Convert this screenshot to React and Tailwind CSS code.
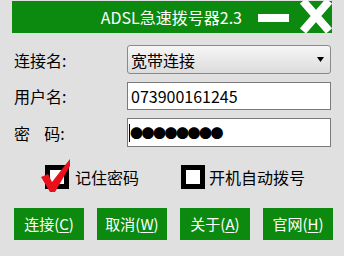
import React from "react";

const font = { fontFamily: '"Noto Sans CJK SC", "Noto Sans", sans-serif' };

const Check = ({ checked }) => (
  <span className="relative w-[24px] h-[24px] bg-black flex items-center justify-center">
    <span className="w-[14px] h-[14px] bg-white" />
    {checked && (
      <svg className="absolute left-[-8px] top-[-8px]" width="40" height="40" viewBox="0 0 40 40">
        <path d="M4 20 L11 17 L15 25 L29 7 L33 2 L33 9 L18 35 L13 35 Z" fill="#e8101a" />
      </svg>
    )}
  </span>
);

const Btn = ({ label, k }) => (
  <button className="w-[70px] h-[32px] bg-[#0b8a0f] text-white text-[15px] flex items-center justify-center">
    {label}(<span className="underline underline-offset-2">{k}</span>)
  </button>
);

export default function App() {
  return (
    <div className="w-[344px] h-[256px] bg-[#e0e0e0] flex flex-col text-black" style={font}>
      {/* title bar */}
      <div className="ml-[12px] mt-[1px] w-[320px] h-[32px] bg-[#0b8a0f] flex items-center text-white">
        <div className="flex-1 text-right pr-[16px] text-[16px] leading-none">ADSL急速拨号器2.3</div>
        <div className="w-[31px] h-[8px] bg-white mt-[1px]" />
        <svg className="ml-[11px] -mt-[2px]" width="32" height="34" viewBox="0 0 32 34">
          <path d="M3 2 L29 32 M29 2 L3 32" stroke="#fff" strokeWidth="8" />
        </svg>
      </div>

      {/* form */}
      <div className="flex flex-col gap-[8px] mt-[12px] pl-[14px]">
        <div className="flex items-center">
          <span className="w-[113px] text-[16px]">连接名:</span>
          <div className="w-[204px] h-[29px] rounded-[3px] border border-[#8a8a8a] bg-gradient-to-b from-[#f6f6f6] to-[#dcdcdc] flex items-center px-[3px] text-[16px]">
            <span className="flex-1">宽带连接</span>
            <svg className="mr-[3px]" width="7" height="5" viewBox="0 0 7 5">
              <path d="M0 0 H7 L3.5 5 Z" fill="#000" />
            </svg>
          </div>
        </div>
        <div className="flex items-center">
          <span className="w-[113px] text-[16px]">用户名:</span>
          <div className="w-[204px] h-[28px] border border-[#7a7a7a] bg-white flex items-center px-[3px] text-[16px]">
            073900161245
          </div>
        </div>
        <div className="flex items-center">
          <span className="w-[113px] text-[16px]">密&nbsp;&nbsp;&nbsp;&nbsp;码:</span>
          <div className="w-[204px] h-[29px] border border-[#7a7a7a] bg-white flex items-center pl-[1px] text-[16px]">
            <span className="w-[1px] h-[18px] bg-black" />
            <span className="text-[13px] tracking-[-1.5px] leading-none">●●●●●●●●</span>
          </div>
        </div>
      </div>

      {/* checkboxes */}
      <div className="flex items-center mt-[18px] pl-[45px] text-[16px]">
        <Check checked />
        <span className="ml-[6px]">记住密码</span>
        <span className="ml-[42px]"><Check /></span>
        <span className="ml-[4px]">开机自动拨号</span>
      </div>

      {/* buttons */}
      <div className="flex mt-[19px] pl-[14px] gap-[13px]">
        <Btn label="连接" k="C" />
        <Btn label="取消" k="W" />
        <Btn label="关于" k="A" />
        <Btn label="官网" k="H" />
      </div>
    </div>
  );
}
